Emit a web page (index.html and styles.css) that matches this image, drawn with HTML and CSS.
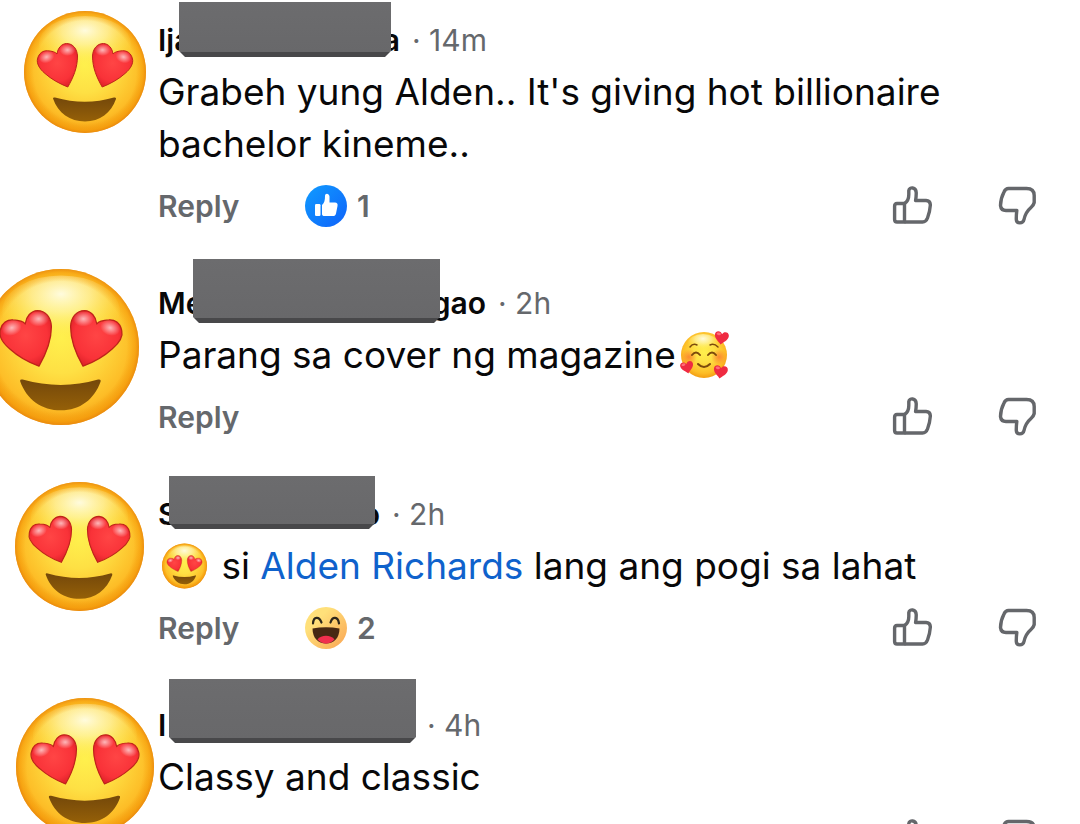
FILE: index.html
```html
<!DOCTYPE html>
<html lang="fil">
<head>
  <meta charset="UTF-8" />
  <meta name="viewport" content="width=device-width, initial-scale=1.0" />
  <title>Comments</title>
  <link rel="stylesheet" href="styles.css">
</head>
<body>
  <svg class="sprite" aria-hidden="true">
    <defs>
      <radialGradient id="face" cx="50%" cy="44%" r="57%">
        <stop offset="0" stop-color="#fff04d" />
        <stop offset="0.4" stop-color="#fee044" />
        <stop offset="0.8" stop-color="#fdbd27" />
        <stop offset="1" stop-color="#f29a10" />
      </radialGradient>
      <radialGradient id="rim">
        <stop offset="0.84" stop-color="#f59a08" stop-opacity="0" />
        <stop offset="0.95" stop-color="#f59a08" stop-opacity="0.55" />
        <stop offset="1" stop-color="#e8850c" stop-opacity="0.8" />
      </radialGradient>
      <radialGradient id="shine" cx="50%" cy="26%" r="62%">
        <stop offset="0" stop-color="#fffde6" stop-opacity="0.95" />
        <stop offset="0.4" stop-color="#fff9b8" stop-opacity="0.65" />
        <stop offset="1" stop-color="#fff04d" stop-opacity="0" />
      </radialGradient>
      <radialGradient id="heartFill" cx="50%" cy="45%" r="60%">
        <stop offset="0" stop-color="#ff4545" />
        <stop offset="0.7" stop-color="#f93238" />
        <stop offset="1" stop-color="#dc1f28" />
      </radialGradient>
      <radialGradient id="heartShine">
        <stop offset="0" stop-color="#fff" stop-opacity="0.65" />
        <stop offset="1" stop-color="#fff" stop-opacity="0" />
      </radialGradient>
      <linearGradient id="mouth" x1="0" y1="0" x2="0" y2="1">
        <stop offset="0" stop-color="#74480a" />
        <stop offset="1" stop-color="#956008" />
      </linearGradient>
      <linearGradient id="blue" x1="0" y1="0" x2="1" y2="1">
        <stop offset="0" stop-color="#109cff" />
        <stop offset="1" stop-color="#0f62fa" />
      </linearGradient>
      <linearGradient id="hahaFace" x1="0" y1="0" x2="1" y2="1">
        <stop offset="0.3" stop-color="#ffe07a" />
        <stop offset="1" stop-color="#f9a352" />
      </linearGradient>
      <radialGradient id="blush">
        <stop offset="0" stop-color="#fb7a30" stop-opacity="0.8" />
        <stop offset="1" stop-color="#fb7a30" stop-opacity="0" />
      </radialGradient>
    </defs>

    <symbol id="heart-eye" viewBox="0 0 122 122">
      <path d="M43.800 76C36 73 27 68 21 62.500C15 57.500 12.500 52 13.500 48C14.800 42 19 39.500 23.500 39.800C28 40 31.500 41 33 43C33.800 37 37.500 32.800 42.500 32.500C49 32.500 53.200 38 53.500 45C53.500 57 49 67 43.800 76Z" fill="url(#heartFill)" stroke="#bd2419" stroke-width="1" stroke-linejoin="round" />
      <ellipse cx="22.500" cy="46" rx="8" ry="6" fill="url(#heartShine)" transform="rotate(-20 22.500 46)" />
      <ellipse cx="43.500" cy="39" rx="8" ry="6" fill="url(#heartShine)" />
    </symbol>

    <symbol id="heart-eyes" viewBox="0 0 122 122">
      <circle cx="61" cy="61" r="61" fill="url(#face)" />
      <ellipse cx="61" cy="33" rx="46" ry="28" fill="url(#shine)" />
      <circle cx="61" cy="61" r="61" fill="url(#rim)" />
      <use href="#heart-eye" width="122" height="122" />
      <use href="#heart-eye" width="122" height="122" transform="translate(122 0) scale(-1 1)" />
      <path d="M29 87.500Q29 86 31 86.500Q61 95 90 86.500Q92.500 86 92 88C87 102 76 110.500 61 110.500C46 110.500 34 102 29 87.500Z" fill="url(#mouth)" />
    </symbol>

    <symbol id="small-heart" viewBox="0 0 16 15">
      <path d="M8 14.500C6 12 .5 9 .5 4.500C.5 0 6.500-.5 8 3.500C9.500-.5 15.500 0 15.500 4.500C15.500 9 10 12 8 14.500Z" fill="#ef2b42" />
      <ellipse cx="4.500" cy="3.500" rx="2.300" ry="1.500" fill="#ff6d78" />
    </symbol>

    <symbol id="smiling-hearts" viewBox="0 0 50 48">
      <circle cx="24" cy="24" r="23" fill="url(#face)" />
      <ellipse cx="23" cy="12" rx="15" ry="9" fill="url(#shine)" />
      <circle cx="9" cy="26" r="8" fill="url(#blush)" />
      <circle cx="39" cy="26" r="8" fill="url(#blush)" />
      <g fill="none" stroke="#7b4a0c" stroke-width="2" stroke-linecap="round">
        <path d="M10 16Q13 12 17 14M30 14Q34 12 38 16" stroke-width="1.500" />
        <path d="M12 24Q16 19 20 24M28 24Q32 19 36 24" />
        <path d="M18 33Q24 39 30 33" />
      </g>
      <use href="#small-heart" x="34" y="0" width="15" height="14" transform="rotate(8 41 7)" />
      <use href="#small-heart" x="0" y="30" width="14" height="13" transform="rotate(-12 7 36)" />
      <use href="#small-heart" x="33" y="34" width="15" height="14" transform="rotate(8 40 41)" />
    </symbol>

    <symbol id="like-badge" viewBox="0 0 42 42">
      <circle cx="21" cy="21" r="21" fill="url(#blue)" />
      <rect x="10" y="19" width="5.500" height="12" rx="1.200" fill="#fff" />
      <path d="M17 20C19.500 18 20 15 20 11C20 8 24 8 24.500 11.500V17.500H30C32 17.500 33 19 32.500 21L31 28.500C30.500 30.500 29.500 31 28 31H19.500C18 31 17 30.500 17 29Z" fill="#fff" />
    </symbol>

    <symbol id="haha-badge" viewBox="0 0 42 42">
      <circle cx="21" cy="21" r="21" fill="url(#hahaFace)" />
      <path d="M8 16.500C8.500 9.500 14 9 16.500 15.500M25.500 15.500C27.500 9 33 9.500 34 16.500" fill="none" stroke="#2d271b" stroke-width="2.200" stroke-linecap="round" />
      <path d="M7.500 21.500Q21 19 34.500 21.500C34.500 31 29 36.500 21 36.500C13 36.500 7.500 31 7.500 21.500Z" fill="#472813" />
      <path d="M12.500 32.500C16 27.500 26 27.500 29.500 32.500C24.500 38 17.500 38 12.500 32.500Z" fill="#f02f4e" />
    </symbol>

    <symbol id="thumb-up" viewBox="0 0 40 40">
      <g fill="none" stroke="#65676b" stroke-width="3.400" stroke-linejoin="round">
        <path d="M12.500 17.500H5Q2.600 17.500 2.600 20V33.500Q2.600 36 5 36H12.500Z" />
        <path d="M12.500 17.500C15 16 16.800 13 16.800 8.500V4.500C17.500.8 24 .8 24.200 6.500C24.300 9 24 12 23.600 14.500H34Q38.600 14.800 38.300 19.500C38 24.500 37 28 35.500 32Q34 36 30.500 36H12.500" />
      </g>
    </symbol>

    <symbol id="thumb-down" viewBox="0 0 40 40">
      <path d="M10.500 2.500H28.500Q36.200 2.500 36.200 9.500V16.500Q35.500 19.500 33 21.500C29.500 24.500 27 28.500 26 33.500C25 38 18.500 38 18.300 33.500C18.200 30.500 18.500 27 18.800 24.500H8Q3 24.500 2.500 19.500Q2.600 12.500 6 6Q7.500 2.500 10.500 2.500Z" fill="none" stroke="#65676b" stroke-width="3.400" stroke-linejoin="round" />
    </symbol>
  </svg>

  <main class="comments">
    <article class="comment comment-first">
      <div class="avatar"><svg viewBox="0 0 122 122"><use href="#heart-eyes" /></svg></div>
      <div class="content">
        <header class="meta">
          <span class="name"><span>Ija</span><span>a</span><span class="cover"></span></span>
          <span class="time">· 14m</span>
        </header>
        <p class="text">Grabeh yung Alden.. It's giving hot billionaire bachelor kineme..</p>
        <footer class="actions">
          <button class="reply">Reply</button>
          <span class="reaction"><svg><use href="#like-badge" /></svg>1</span>
          <span class="votes">
            <button aria-label="Like"><svg><use href="#thumb-up" /></svg></button>
            <button aria-label="Dislike"><svg><use href="#thumb-down" /></svg></button>
          </span>
        </footer>
      </div>
    </article>

    <article class="comment comment-second">
      <div class="avatar"><svg viewBox="0 0 122 122"><use href="#heart-eyes" /></svg></div>
      <div class="content">
        <header class="meta">
          <span class="name"><span>Me</span><span>gao</span><span class="cover"></span></span>
          <span class="time">· 2h</span>
        </header>
        <p class="text">Parang sa cover ng magazine<svg class="emoji"><use href="#smiling-hearts" /></svg></p>
        <footer class="actions">
          <button class="reply">Reply</button>
          <span class="votes">
            <button aria-label="Like"><svg><use href="#thumb-up" /></svg></button>
            <button aria-label="Dislike"><svg><use href="#thumb-down" /></svg></button>
          </span>
        </footer>
      </div>
    </article>

    <article class="comment comment-third">
      <div class="avatar"><svg viewBox="0 0 122 122"><use href="#heart-eyes" /></svg></div>
      <div class="content">
        <header class="meta">
          <span class="name"><span>S</span><span>o</span><span class="cover"></span></span>
          <span class="time">· 2h</span>
        </header>
        <p class="text"><svg class="emoji emoji-lead"><use href="#heart-eyes" /></svg> si <a href="#">Alden Richards</a> lang ang pogi sa lahat</p>
        <footer class="actions">
          <button class="reply">Reply</button>
          <span class="reaction"><svg><use href="#haha-badge" /></svg>2</span>
          <span class="votes">
            <button aria-label="Like"><svg><use href="#thumb-up" /></svg></button>
            <button aria-label="Dislike"><svg><use href="#thumb-down" /></svg></button>
          </span>
        </footer>
      </div>
    </article>

    <article class="comment comment-fourth">
      <div class="avatar"><svg viewBox="0 0 122 122"><use href="#heart-eyes" /></svg></div>
      <div class="content">
        <header class="meta">
          <span class="name"><span>I</span><span class="cover"></span></span>
          <span class="time">· 4h</span>
        </header>
        <p class="text">Classy and classic</p>
        <footer class="actions">
          <button class="reply">Reply</button>
          <span class="votes">
            <button aria-label="Like"><svg><use href="#thumb-up" /></svg></button>
            <button aria-label="Dislike"><svg><use href="#thumb-down" /></svg></button>
          </span>
        </footer>
      </div>
    </article>
  </main>
</body>
</html>
```
FILE: styles.css
```css
* {
  box-sizing: border-box;
}
body {
  margin: 0;
  background: #fff;
  color: #080809;
  font-family: Inter, "Liberation Sans", sans-serif;
}
.sprite {
  position: absolute;
  width: 0;
  height: 0;
}
.comments {
  display: flex;
  flex-direction: column;
  gap: 50px;
  height: 100vh;
  overflow: hidden;
  padding: 14px 42px 0 0;
}
.comment {
  display: flex;
  flex-shrink: 0;
}
.avatar {
  flex: 0 0 158px;
  height: 120px;
}
.avatar svg {
  display: block;
  overflow: visible;
}
.content {
  flex: 1;
  min-width: 0;
}
.meta {
  display: flex;
  align-items: center;
  gap: 12px;
  height: 52px;
  font-size: 30px;
}
.name {
  position: relative;
  display: flex;
  justify-content: space-between;
  font-weight: 600;
  line-height: 52px;
}
.time {
  color: #65686c;
}
.text {
  margin: 0;
  font-size: 37px;
  line-height: 52px;
}
.text a {
  color: #0f62cc;
  text-decoration: none;
}
.emoji {
  width: 50px;
  height: 48px;
  margin: -8px 4px 0;
  vertical-align: -11px;
}
.emoji-lead {
  width: 45px;
}
.actions {
  display: flex;
  align-items: center;
  height: 42px;
  margin-top: 15px;
  color: #65686c;
  font-size: 30px;
  font-weight: 600;
}
button {
  padding: 0;
  border: 0;
  background: none;
  color: inherit;
  font: inherit;
  cursor: pointer;
}
.reply {
  width: 84px;
  line-height: 28px;
  text-align: left;
}
.reaction {
  display: flex;
  align-items: center;
  gap: 10px;
  margin-left: 63px;
}
.reaction svg {
  width: 42px;
  height: 42px;
}
.votes {
  display: flex;
  gap: 66px;
  margin-left: auto;
}
.votes svg {
  display: block;
  width: 40px;
  height: 40px;
}

/* grey box drawn over each name */
.cover {
  position: absolute;
  background: linear-gradient(#6c6c6e, #68686a);
  border-bottom: 5px solid #48484a;
  clip-path: polygon(0 0, 100% 0, 100% calc(100% - 6px), calc(100% - 6px) 100%, 6px 100%, 0 calc(100% - 6px));
}

/* sticker and name box sizes per comment */
.comment-first .avatar svg {
  width: 122px;
  height: 122px;
  margin: -3px 0 0 24px;
}
.comment-first .name {
  width: 242px;
}
.comment-first .cover {
  top: -12px;
  left: 21px;
  width: 212px;
  height: 55px;
}
.comment-second .avatar svg {
  width: 156px;
  height: 156px;
  margin: -8px 0 0 -17px;
}
.comment-second .name {
  width: 328px;
}
.comment-second .cover {
  top: -18px;
  left: 35px;
  width: 247px;
  height: 64px;
}
.comment-third .avatar svg {
  width: 129px;
  height: 129px;
  margin: -6px 0 0 15px;
}
.comment-third .name {
  width: 222px;
}
.comment-third .cover {
  top: -12px;
  left: 11px;
  width: 206px;
  height: 53px;
}
.comment-fourth .avatar svg {
  width: 138px;
  height: 138px;
  margin: -1px 0 0 16px;
}
.comment-fourth .name {
  width: 257px;
}
.comment-fourth .cover {
  top: -20px;
  left: 11px;
  width: 247px;
  height: 64px;
}
```
